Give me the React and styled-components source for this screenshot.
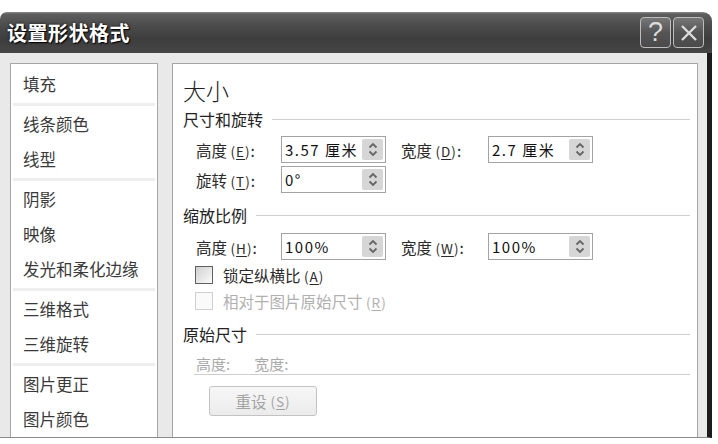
import React from "react";
import styled, { createGlobalStyle } from "styled-components";

const GlobalStyle = createGlobalStyle`
  html, body {
    margin: 0;
    padding: 0;
    background: #ffffff;
  }
  body {
    font-family: "Noto Sans CJK SC", "Noto Sans", sans-serif;
    color: #2a2a2a;
  }
`;

const Window = styled.div`
  width: 712px;
  margin-top: 12px;
`;

const TitleBar = styled.div`
  height: 41px;
  border-radius: 7px 9px 0 0;
  background: linear-gradient(#8c8c8c 0, #5e5e5e 2px, #4b4b4b 35%, #3d3d3d 65%, #464646 100%);
  display: flex;
  align-items: center;
  padding: 0 8px 0 7px;
  box-sizing: border-box;
`;

const Title = styled.div`
  flex: 1;
  color: #ffffff;
  font-size: 20px;
  font-weight: 700;
  letter-spacing: 0.5px;
  text-shadow: 1px 1px 1px #000, 0 0 3px #111;
`;

const CaptionButton = styled.div`
  width: 31px;
  height: 31px;
  margin-left: 2px;
  box-sizing: border-box;
  border: 1px solid #bdbdbd;
  border-radius: 4px;
  background: linear-gradient(#777 0, #555 50%, #4a4a4a 100%);
  color: #dcdcdc;
  display: flex;
  align-items: center;
  justify-content: center;
  font-family: "Liberation Sans", Arial, sans-serif;
  font-size: 27px;
  line-height: 1;
`;

const Frame = styled.div`
  height: 385px;
  box-sizing: border-box;
  display: flex;
  gap: 14px;
  padding: 10px 9px 0 10px;
  background: #e9e9e9;
  border-right: 5px solid #1c1c1c;
  border-bottom: 1px solid #8a8a8a;
`;

const Nav = styled.div`
  width: 148px;
  box-sizing: border-box;
  background: #ffffff;
  border: 1px solid #a6a6a6;
  border-bottom: none;
  padding-top: 3px;
`;

const NavItem = styled.div`
  height: 35px;
  line-height: 35px;
  padding-left: 12px;
  font-size: 16.5px;
  color: #3a3a3a;
  white-space: nowrap;
`;

const NavSep = styled.div`
  height: 3px;
  margin: 1px 2px;
  background: #eeeeee;
`;

const Content = styled.div`
  flex: 1;
  box-sizing: border-box;
  background: #ffffff;
  border: 1px solid #a6a6a6;
  border-bottom: none;
  padding: 11px 7px 0 10px;
`;

const PaneTitle = styled.div`
  font-size: 23px;
  font-weight: 300;
  line-height: 30px;
  color: #222;
`;

const Section = styled.div`
  display: flex;
  align-items: center;
  gap: 9px;
  height: 22px;
  margin-top: ${p => p.$top}px;
  font-size: 16px;
  color: #222;
  &::after {
    content: "";
    flex: 1;
    height: 1px;
    background: #cfcfcf;
  }
`;

const Row = styled.div`
  display: flex;
  align-items: center;
  height: 27px;
  margin-top: ${p => p.$top}px;
  padding-left: 13px;
`;

const Label = styled.div`
  width: ${p => p.$w}px;
  margin-left: ${p => p.$left || 0}px;
  font-size: 15.5px;
  color: #2a2a2a;
  white-space: nowrap;
  u {
    text-decoration: underline;
    text-underline-offset: 2px;
  }
  span {
    font-size: 13.5px;
    letter-spacing: 1px;
  }
`;

const Field = styled.div`
  width: 105px;
  height: 27px;
  box-sizing: border-box;
  border: 1px solid #a3a3a3;
  display: flex;
  align-items: center;
  padding: 0 2px 0 3px;
  background: #fff;
`;

const FieldText = styled.div`
  flex: 1;
  overflow: hidden;
  white-space: nowrap;
  font-size: 15px;
  color: #111;
  letter-spacing: 1.5px;
`;

const Spin = styled.div`
  flex: none;
  width: 21px;
  height: 21px;
  border-radius: 2px;
  background: #d6d6d6;
  display: flex;
  align-items: center;
  justify-content: center;
`;

const CheckRow = styled.div`
  display: flex;
  align-items: center;
  height: 26px;
  margin-top: ${p => p.$top || 0}px;
  padding-left: 12px;
  gap: 10px;
  font-size: 15.5px;
  color: ${p => (p.$disabled ? "#b0b0b0" : "#2a2a2a")};
  span {
    font-size: 13.5px;
    letter-spacing: 1px;
  }
  u {
    text-underline-offset: 2px;
  }
`;

const Box = styled.div`
  width: 18px;
  height: 18px;
  box-sizing: border-box;
  border: 1px solid ${p => (p.$disabled ? "#d0d0d0" : "#606060")};
  background: ${p =>
    p.$disabled ? "#fafafa" : "linear-gradient(135deg, #d0d0d0, #fbfbfb)"};
`;

const InfoLine = styled.div`
  margin-top: 7px;
  margin-left: 11px;
  height: 22px;
  display: flex;
  align-items: center;
  gap: 24px;
  font-size: 15px;
  color: #a9a9a9;
  border-bottom: 1px solid #cfcfcf;
  padding-left: 2px;
`;

const Button = styled.div`
  margin: 11px 0 0 26px;
  width: 108px;
  height: 30px;
  box-sizing: border-box;
  border: 1px solid #c3c3c3;
  border-radius: 3px;
  background: linear-gradient(#f7f7f7, #ebebeb);
  color: #a3a3a3;
  font-size: 15.5px;
  display: flex;
  align-items: center;
  justify-content: center;
  gap: 4px;
  span {
    font-size: 13.5px;
    letter-spacing: 1px;
  }
  u {
    text-underline-offset: 2px;
  }
`;

const Spinner = () => (
  <Spin>
    <svg width="10" height="15" viewBox="0 0 10 15">
      <path d="M1.5 5.5 L5 2 L8.5 5.5" fill="none" stroke="#666" strokeWidth="1.8" />
      <path d="M1.5 9.5 L5 13 L8.5 9.5" fill="none" stroke="#666" strokeWidth="1.8" />
    </svg>
  </Spin>
);

const Input = ({ value }) => (
  <Field>
    <FieldText>{value}</FieldText>
    <Spinner />
  </Field>
);

const Key = ({ k }) => (
  <span>
    (<u>{k}</u>)
  </span>
);

const navGroups = [
  ["填充"],
  ["线条颜色", "线型"],
  ["阴影", "映像", "发光和柔化边缘"],
  ["三维格式", "三维旋转"],
  ["图片更正", "图片颜色"],
];

export default function App() {
  return (
    <>
      <GlobalStyle />
      <Window>
        <TitleBar>
          <Title>设置形状格式</Title>
          <CaptionButton>?</CaptionButton>
          <CaptionButton>
            <svg width="20" height="20" viewBox="0 0 20 20">
              <path d="M3 3 L17 17 M17 3 L3 17" stroke="#dcdcdc" strokeWidth="2.4" />
            </svg>
          </CaptionButton>
        </TitleBar>
        <Frame>
          <Nav>
            {navGroups.map((group, i) => (
              <React.Fragment key={i}>
                {i > 0 && <NavSep />}
                {group.map(item => (
                  <NavItem key={item}>{item}</NavItem>
                ))}
              </React.Fragment>
            ))}
          </Nav>
          <Content>
            <PaneTitle>大小</PaneTitle>
            <Section $top={3}>尺寸和旋转</Section>
            <Row $top={6}>
              <Label $w={85}>
                高度 <Key k="E" />:
              </Label>
              <Input value="3.57 厘米" />
              <Label $w={87} $left={15}>
                宽度 <Key k="D" />:
              </Label>
              <Input value="2.7 厘米" />
            </Row>
            <Row $top={3}>
              <Label $w={85}>
                旋转 <Key k="T" />:
              </Label>
              <Input value="0°" />
            </Row>
            <Section $top={11}>缩放比例</Section>
            <Row $top={7}>
              <Label $w={85}>
                高度 <Key k="H" />:
              </Label>
              <Input value="100%" />
              <Label $w={87} $left={15}>
                宽度 <Key k="W" />:
              </Label>
              <Input value="100%" />
            </Row>
            <CheckRow $top={2}>
              <Box />
              <div>
                锁定纵横比 <Key k="A" />
              </div>
            </CheckRow>
            <CheckRow $disabled>
              <Box $disabled />
              <div>
                相对于图片原始尺寸 <Key k="R" />
              </div>
            </CheckRow>
            <Section $top={9}>原始尺寸</Section>
            <InfoLine>
              <div>高度:</div>
              <div>宽度:</div>
            </InfoLine>
            <Button>
              <div>重设</div>
              <Key k="S" />
            </Button>
          </Content>
        </Frame>
      </Window>
    </>
  );
}
